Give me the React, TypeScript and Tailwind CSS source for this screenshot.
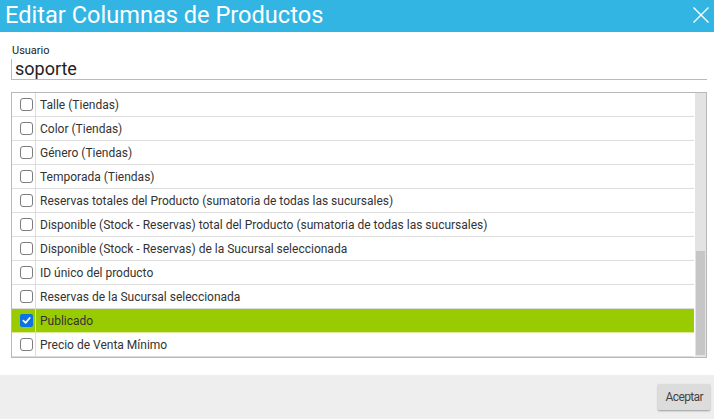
import React, { useState } from 'react';

const columns = [
  'Talle (Tiendas)',
  'Color (Tiendas)',
  'Género (Tiendas)',
  'Temporada (Tiendas)',
  'Reservas totales del Producto (sumatoria de todas las sucursales)',
  'Disponible (Stock - Reservas) total del Producto (sumatoria de todas las sucursales)',
  'Disponible (Stock - Reservas) de la Sucursal seleccionada',
  'ID único del producto',
  'Reservas de la Sucursal seleccionada',
  'Publicado',
  'Precio de Venta Mínimo',
];

const CheckBox: React.FC<{ checked: boolean }> = ({ checked }) =>
  checked ? (
    <div className="w-[13px] h-[13px] rounded-[2px] bg-[#0b73e3] flex items-center justify-center">
      <svg width="9" height="9" viewBox="0 0 10 10" fill="none">
        <path d="M1.5 5.2 L4 7.6 L8.6 2.2" stroke="white" strokeWidth="1.9" strokeLinecap="round" strokeLinejoin="round" />
      </svg>
    </div>
  ) : (
    <div className="w-[13px] h-[13px] rounded-[3px] border border-[#7d7d7d] bg-white" />
  );

export default function App() {
  const [checked, setChecked] = useState<Record<string, boolean>>({ Publicado: true });

  return (
    <div className="w-[714px] h-[419px] flex flex-col bg-white font-['Roboto',sans-serif] overflow-hidden">
      {/* header */}
      <div className="h-[32px] bg-[#33b5e4] flex items-center justify-between pl-[5px] pr-[3px]">
        <span className="text-white text-[23.6px] leading-none">Editar Columnas de Productos</span>
        <svg width="20" height="20" viewBox="0 0 20 20" className="mb-[2px]">
          <path d="M2.5 2.5 L17.5 17.5 M17.5 2.5 L2.5 17.5" stroke="white" strokeWidth="1.4" />
        </svg>
      </div>

      {/* body */}
      <div className="flex-1 pl-[11px] pr-[7px] pt-[13px] flex flex-col">
        <div className="text-[11px] text-[#222] leading-none pl-[1px]">Usuario</div>
        <div className="mt-[3px] h-[21px] border-l border-b border-[#bbbbbb] pl-[3px] flex items-center">
          <span className="text-[18px] text-[#222] leading-none">soporte</span>
        </div>

        <div className="mt-[12px] h-[266px] border border-[#b8b8b8] flex overflow-hidden">
          <div className="flex-1 flex flex-col">
            {columns.map((c) => {
              const on = !!checked[c];
              return (
                <div
                  key={c}
                  onClick={() => setChecked({ ...checked, [c]: !on })}
                  className={`h-[24px] shrink-0 flex border-b ${on ? 'bg-[#99cc00] border-[#dce99a]' : 'border-[#dddddd]'}`}
                >
                  <div className="w-[24px] flex items-center pl-[8px] border-r border-[#dddddd]">
                    <CheckBox checked={on} />
                  </div>
                  <div className="pl-[4px] flex items-center text-[12px] text-[#333]">{c}</div>
                </div>
              );
            })}
          </div>
          <div className="w-[11px] ml-[1px] bg-[#e3e3e3] flex flex-col pt-[158px] pb-[2px] px-[1px]">
            <div className="flex-1 bg-[#c6c6c6]" />
          </div>
        </div>
      </div>

      {/* footer */}
      <div className="h-[44px] bg-[#eeeeee] flex items-center justify-end pr-[4px]">
        <button className="h-[26px] px-[7px] bg-[#dcdcdc] text-[#444] text-[12px] tracking-[-0.6px] rounded-[1px] shadow-[0_1px_2px_rgba(0,0,0,0.35)]">
          Aceptar
        </button>
      </div>
    </div>
  );
}
